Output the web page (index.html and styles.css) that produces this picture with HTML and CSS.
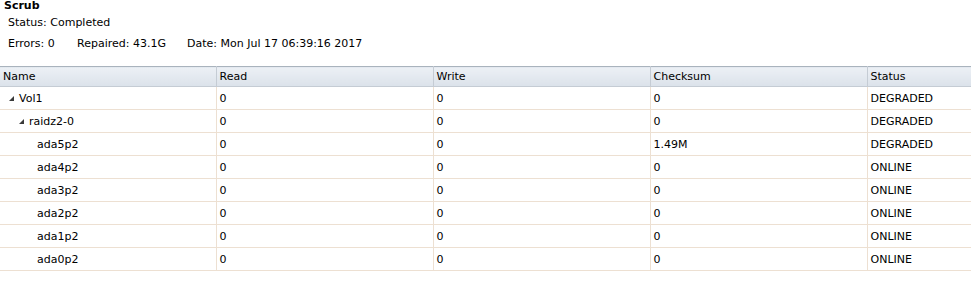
FILE: index.html
```html
<!DOCTYPE html>
<html>
<head>
<meta charset="utf-8">
<link rel="stylesheet" href="styles.css">
</head>
<body>
<div class="title">Scrub</div>
<div class="status">Status: Completed</div>
<div class="stats">
  <span class="stat s1">Errors: 0</span>
  <span class="stat s2">Repaired: 43.1G</span>
  <span class="stat s3">Date: Mon Jul 17 06:39:16 2017</span>
</div>
<table class="grid">
  <colgroup>
    <col class="c-name"><col class="c-read"><col class="c-write"><col class="c-sum"><col class="c-status">
  </colgroup>
  <thead>
    <tr><th>Name</th><th>Read</th><th>Write</th><th>Checksum</th><th>Status</th></tr>
  </thead>
  <tbody>
    <tr><td><span class="node lvl1"><svg class="tri" width="5" height="5" viewBox="0 0 5 5"><polygon points="5,0 5,5 0,5" fill="#3a3a3a"/></svg>Vol1</span></td><td>0</td><td>0</td><td>0</td><td>DEGRADED</td></tr>
    <tr><td><span class="node lvl2"><svg class="tri" width="5" height="5" viewBox="0 0 5 5"><polygon points="5,0 5,5 0,5" fill="#3a3a3a"/></svg>raidz2-0</span></td><td>0</td><td>0</td><td>0</td><td>DEGRADED</td></tr>
    <tr><td><span class="node leaf">ada5p2</span></td><td>0</td><td>0</td><td>1.49M</td><td>DEGRADED</td></tr>
    <tr><td><span class="node leaf">ada4p2</span></td><td>0</td><td>0</td><td>0</td><td>ONLINE</td></tr>
    <tr><td><span class="node leaf">ada3p2</span></td><td>0</td><td>0</td><td>0</td><td>ONLINE</td></tr>
    <tr><td><span class="node leaf">ada2p2</span></td><td>0</td><td>0</td><td>0</td><td>ONLINE</td></tr>
    <tr><td><span class="node leaf">ada1p2</span></td><td>0</td><td>0</td><td>0</td><td>ONLINE</td></tr>
    <tr><td><span class="node leaf">ada0p2</span></td><td>0</td><td>0</td><td>0</td><td>ONLINE</td></tr>
  </tbody>
</table>
</body>
</html>
```
FILE: styles.css
```css
html, body {
  margin: 0;
  padding: 0;
  background: #fff;
}
body {
  font-family: "DejaVu Sans", Verdana, sans-serif;
  font-size: 11px;
  color: #000;
}
.title {
  font-weight: bold;
  padding-left: 4px;
  line-height: 12px;
  height: 12px;
}
.status {
  padding-left: 8px;
  margin-top: 3px;
  line-height: 15px;
}
.stats {
  display: flex;
  padding-left: 8px;
  margin-top: 6px;
  line-height: 15px;
}
.s1 { width: 69px; }
.s2 { width: 110px; }
.grid {
  margin-top: 15px;
  width: 971px;
  border-collapse: collapse;
  table-layout: fixed;
}
.c-name { width: 216px; }
.c-read { width: 217px; }
.c-write { width: 217px; }
.c-sum { width: 217px; }
.c-status { width: 104px; }
.grid th {
  text-align: left;
  font-weight: normal;
  height: 19px;
  padding: 0 0 0 3px;
  background: linear-gradient(#ecf0f5, #dbe2ea);
  border-top: 1px solid #a9b3bd;
  border-bottom: 1px solid #c5ccd4;
  border-right: 1px solid #c5ccd4;
}
.grid th:last-child { border-right: 1px solid #a9b3bd; }
.grid td {
  height: 22px;
  padding: 0 0 0 3px;
  border-bottom: 1px solid #ede0d2;
  border-right: 1px solid #ede0d2;
  white-space: nowrap;
}
.grid td:last-child { border-right: none; }
.node { display: inline-flex; align-items: center; }
.tri { margin-right: 5px; }
.lvl1 { padding-left: 6px; }
.lvl2 { padding-left: 16px; }
.leaf { padding-left: 34px; }
```
